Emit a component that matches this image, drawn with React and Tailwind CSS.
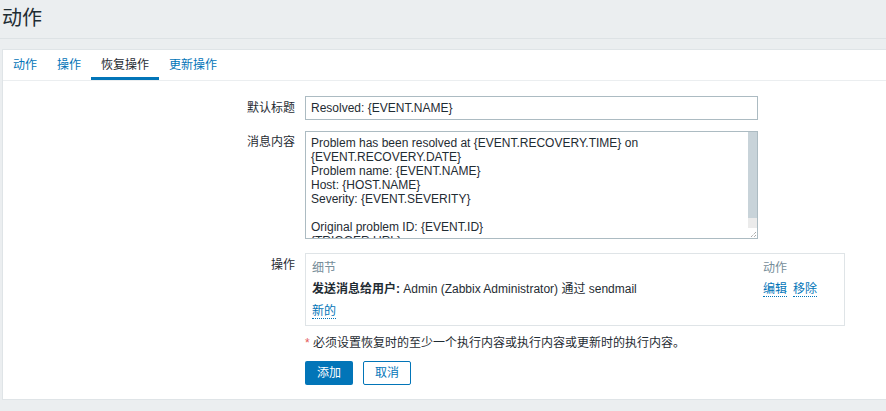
import React from 'react';

const font = { fontFamily: '"Liberation Sans", Arial, "Noto Sans CJK SC", sans-serif' };

const tabs = ['动作', '操作', '恢复操作', '更新操作'];

const messageLines = [
  'Problem has been resolved at {EVENT.RECOVERY.TIME} on',
  '{EVENT.RECOVERY.DATE}',
  'Problem name: {EVENT.NAME}',
  'Host: {HOST.NAME}',
  'Severity: {EVENT.SEVERITY}',
  '',
  'Original problem ID: {EVENT.ID}',
  '{TRIGGER.URL}',
];

function Row({ label, children, labelClass = 'pt-[5px]' }) {
  return (
    <div className="flex">
      <div className={`w-[302px] shrink-0 pr-[10px] text-right text-[12px] leading-[14px] text-[#1f2c33] ${labelClass}`}>
        {label}
      </div>
      <div className="flex-1">{children}</div>
    </div>
  );
}

export default function App() {
  return (
    <div className="h-[411px] w-[886px] overflow-hidden bg-[#ebeef0] text-[#1f2c33]" style={font}>
      <div className="h-[39px] border-b border-[#dde2e5] pl-[2px] pt-[4px]">
        <h1 className="text-[20px] leading-[28px] font-normal">动作</h1>
      </div>

      <div className="mt-[10px] ml-[2px] h-[351px] border border-r-0 border-[#dfe4e7] bg-white">
        <div className="flex h-[31px] border-b border-[#ebeef0] text-[12px]">
          {tabs.map((t, i) => (
            <div
              key={t}
              className={`flex items-center px-[10px] ${i === 2 ? 'border-b-[3px] border-[#0275b8] pt-[3px] text-[#1f2c33]' : 'text-[#0275b8]'}`}
            >
              {t}
            </div>
          ))}
        </div>

        <div className="flex flex-col pt-[15px]">
          <Row label="默认标题">
            <div className="flex h-[24px] w-[453px] items-center border border-[#acbbc2] px-[5px] text-[12px]">
              Resolved: {'{EVENT.NAME}'}
            </div>
          </Row>

          <div className="mt-[11px]">
            <Row label="消息内容" labelClass="pt-[4px]">
              <div className="flex h-[108px] w-[453px] border border-[#acbbc2]">
                <div className="flex-1 overflow-hidden px-[5px] pt-[4px] text-[12px] leading-[14px]">
                  {messageLines.map((l, i) => (
                    <div key={i} className="h-[14px] whitespace-nowrap">{l}</div>
                  ))}
                </div>
                <div className="flex w-[9px] flex-col">
                  <div className="h-[86px] bg-[#c8d3d9]" />
                  <div className="flex-1 bg-[#ebebeb]" />
                  <div className="flex h-[10px] items-end justify-end bg-white">
                    <svg width="7" height="7" viewBox="0 0 7 7">
                      <path d="M6 1 L1 6 M6 4 L4 6" stroke="#888" strokeWidth="1" strokeDasharray="1 1" />
                    </svg>
                  </div>
                </div>
              </div>
            </Row>
          </div>

          <div className="mt-[14px]">
            <Row label="操作" labelClass="pt-[5px]">
              <div className="w-[540px] border border-[#dfe4e7] px-[6px] pt-[7px] pb-[6px] text-[12px] leading-[14px]">
                <div className="flex text-[#768d99]">
                  <div className="flex-1">细节</div>
                  <div className="w-[75px]">动作</div>
                </div>
                <div className="mt-[7px] flex">
                  <div className="flex-1">
                    <span className="font-bold">发送消息给用户:</span> Admin (Zabbix Administrator) 通过 sendmail
                  </div>
                  <div className="flex w-[75px] gap-[6px] text-[#0275b8]">
                    <span className="border-b border-dotted border-[#0275b8]">编辑</span>
                    <span className="border-b border-dotted border-[#0275b8]">移除</span>
                  </div>
                </div>
                <div className="mt-[7px] flex">
                  <span className="border-b border-dotted border-[#0275b8] text-[#0275b8]">新的</span>
                </div>
              </div>
            </Row>
          </div>

          <div className="mt-[10px]">
            <Row label="" labelClass="">
              <div className="text-[12px] leading-[14px]">
                <span className="text-[#e45959]">*</span> 必须设置恢复时的至少一个执行内容或执行内容或更新时的执行内容。
              </div>
            </Row>
          </div>

          <div className="mt-[11px]">
            <Row label="" labelClass="">
              <div className="flex gap-[10px] text-[12px]">
                <button className="h-[24px] w-[48px] rounded-[2px] bg-[#0275b8] text-white">添加</button>
                <button className="h-[24px] w-[48px] rounded-[2px] border border-[#0275b8] bg-white text-[#0275b8]">取消</button>
              </div>
            </Row>
          </div>
        </div>
      </div>
    </div>
  );
}
